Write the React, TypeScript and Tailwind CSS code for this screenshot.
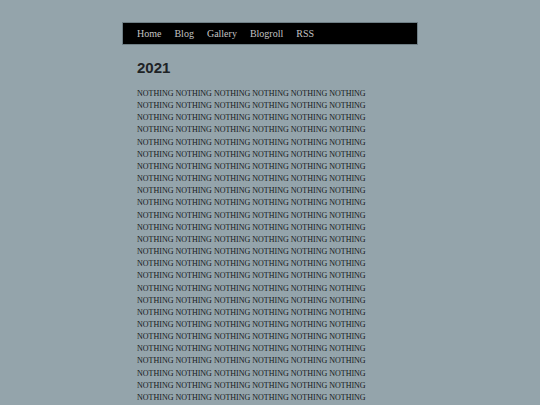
const words = Array.from({ length: 6 * 40 }, () => "NOTHING").join(" ");

const links = ["Home", "Blog", "Gallery", "Blogroll", "RSS"];

export default function App() {
  return (
    <div className="min-h-[405px] bg-[#94a4ab] font-['Liberation_Serif',serif]">
      <div className="mx-auto w-[296px] pt-[22px]">
        <nav className="flex h-[23px] items-center gap-[13px] border border-[#6f7f86] bg-black px-[14px]">
          {links.map((l) => (
            <a key={l} href="#" className="text-[10px] leading-none text-[#c4c4c4]">
              {l}
            </a>
          ))}
        </nav>
        <div className="px-[15px] pt-[13px]">
          <h1 className="font-['Liberation_Sans',sans-serif] text-[15px] font-bold leading-[20px] text-[#1e2326]">
            2021
          </h1>
          <p className="mt-[10px] w-[250px] text-[8px] leading-[12.15px] text-[#15191b]">
            {words}
          </p>
        </div>
      </div>
    </div>
  );
}
